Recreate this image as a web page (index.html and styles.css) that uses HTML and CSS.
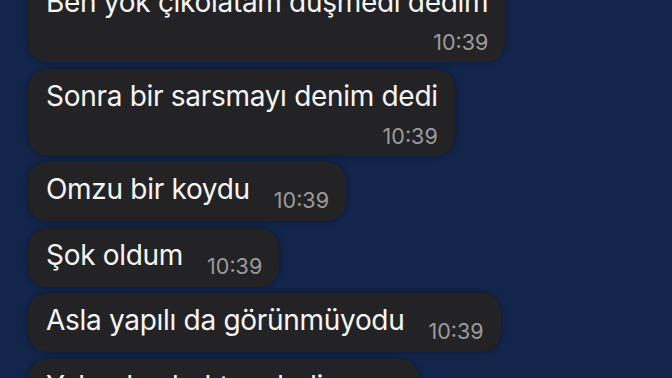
FILE: index.html
```html
<!DOCTYPE html>
<html lang="tr">
<head>
  <meta charset="UTF-8" />
  <title>Sohbet</title>
  <link rel="stylesheet" href="styles.css">
</head>
<body>
  <div class="chat">
    <div class="bubble long">
      <span class="text">Ben yok çikolatam düşmedi dedim</span>
      <span class="time">10:39</span>
    </div>
    <div class="bubble long">
      <span class="text">Sonra bir sarsmayı denim dedi</span>
      <span class="time">10:39</span>
    </div>
    <div class="bubble">
      <span class="text">Omzu bir koydu</span>
      <span class="time">10:39</span>
    </div>
    <div class="bubble">
      <span class="text">Şok oldum</span>
      <span class="time">10:39</span>
    </div>
    <div class="bubble">
      <span class="text">Asla yapılı da görünmüyodu</span>
      <span class="time">10:39</span>
    </div>
    <div class="bubble">
      <span class="text">Yakından baktım dedi</span>
      <span class="time">10:39</span>
    </div>
  </div>
</body>
</html>
```

FILE: styles.css
```css
html, body {
  margin: 0;
  height: 100%;
  overflow: hidden;
}

body {
  background-color: #13254b;
  font-family: Inter, "Noto Sans", sans-serif;
  color: #f6f6f6;
}

.chat {
  display: flex;
  flex-direction: column;
  align-items: flex-start;
  gap: 6.5px;
  margin-top: -25px;
  padding-left: 28px;
}

.bubble {
  display: flex;
  align-items: flex-end;
  gap: 24px;
  padding: 10px 17px 15px 18px;
  background-color: #232325;
  border-radius: 20px;
  box-shadow: 0 0 6px rgba(0, 0, 0, 0.35);
}

.text {
  font-size: 28px;
  line-height: 34px;
  letter-spacing: -0.3px;
  white-space: nowrap;
}

.time {
  font-size: 21.5px;
  line-height: 12px;
  color: #9b9b9d;
}

.bubble.long {
  flex-direction: column;
  align-items: flex-end;
  gap: 0;
  padding-bottom: 10px;
}

.bubble.long .text {
  align-self: flex-start;
}

.bubble.long .time {
  line-height: 20px;
  margin-top: 13px;
}
```
